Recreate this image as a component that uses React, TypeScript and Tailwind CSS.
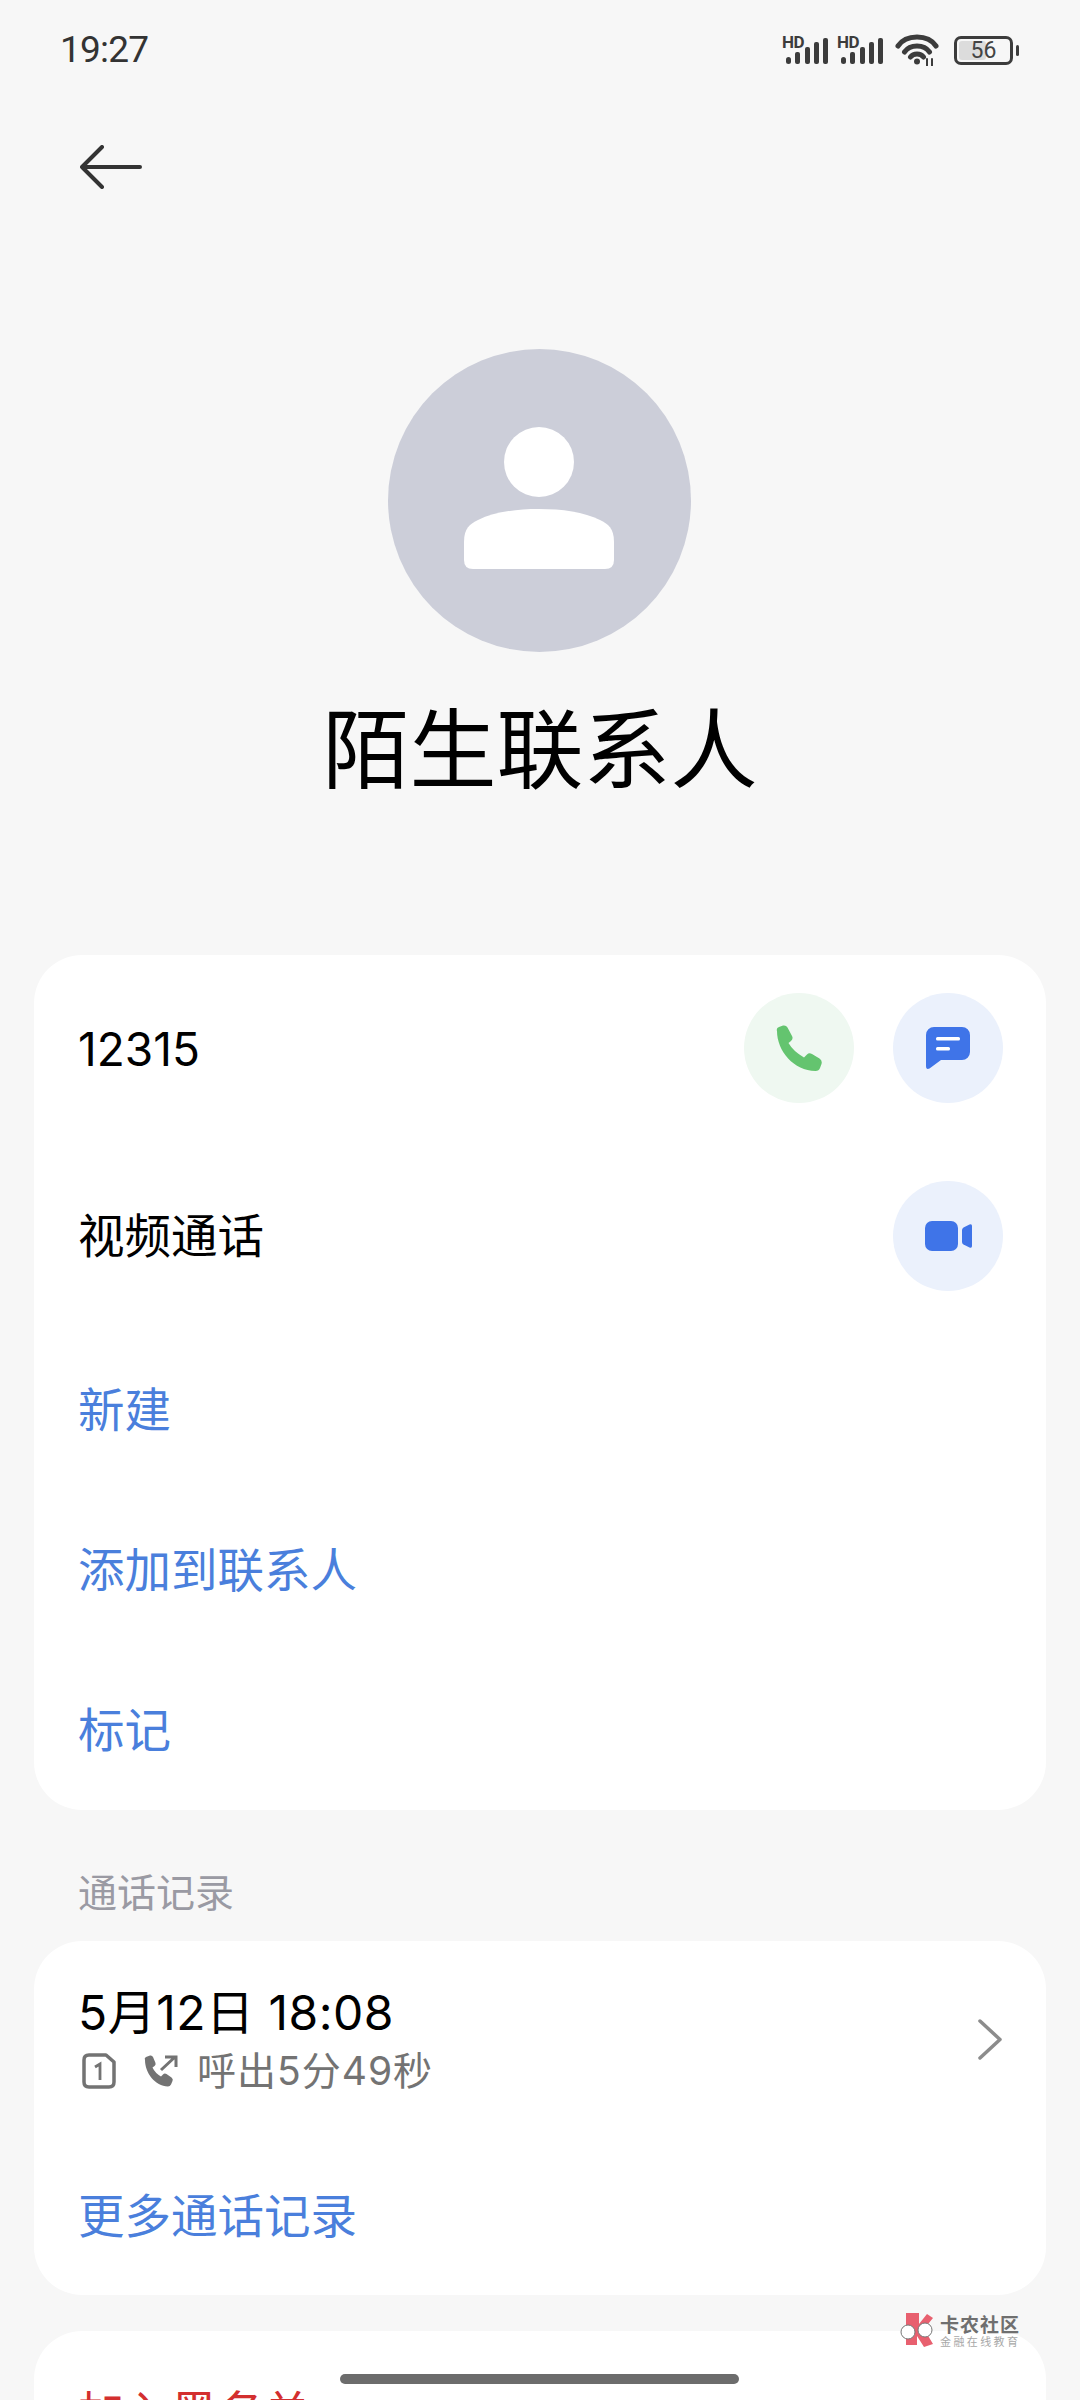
const cjk = "font-['Inter','Noto_Sans_CJK_SC',sans-serif]";

const Signal = () => (
  <div className="relative w-[46px] h-[28px]">
    <span className="absolute left-[-1px] top-[-2px] font-['Roboto',sans-serif] font-bold text-[17px] leading-[16px] tracking-[-0.5px] text-[#3c3c3c]">HD</span>
    <svg width="46" height="28" viewBox="0 0 46 28" fill="#3c3c3c">
      <rect x="3" y="21" width="5" height="7" rx="2.5" />
      <rect x="12" y="16" width="5" height="12" rx="2" />
      <rect x="22" y="11" width="5" height="17" rx="2" />
      <rect x="31" y="6" width="5" height="22" rx="2" />
      <rect x="40" y="2" width="5" height="26" rx="2" />
    </svg>
  </div>
);

const Wifi = () => (
  <svg width="46" height="32" viewBox="0 0 46 32" fill="none" stroke="#3c3c3c" strokeWidth="5" strokeLinecap="round">
    <path d="M3 12C11 0 33 0 41 12" />
    <path d="M9.5 18C15 10 29 10 34.5 18" />
    <path d="M15.5 23C18.5 19 25.5 19 28.5 23" />
    <circle cx="22" cy="27.5" r="3" fill="#3c3c3c" stroke="none" />
    <path d="M32 25V31.5M37 25V31.5" strokeWidth="2" />
  </svg>
);

const Battery = () => (
  <div className="flex items-center gap-[3px]">
    <div className="relative w-[59px] h-[29px] rounded-[7px] border-[3px] border-[#3c3c3c] flex items-center justify-center overflow-hidden">
      <div className="absolute left-[2px] top-[2px] bottom-[2px] w-[27px] rounded-[3px] bg-[#dcdcdc]" />
      <span className="relative font-['Roboto',sans-serif] text-[23px] leading-none text-[#444444]">56</span>
    </div>
    <div className="w-[3px] h-[11px] rounded-full bg-[#3c3c3c]" />
  </div>
);

const PhoneIcon = () => (
  <svg width="46" height="47" viewBox="0 0 46 47" fill="#64c46f">
    <path d="M1 6Q0 3 3 2L7 .6Q10 0 11.5 2.5L16 11Q17.5 14 15 16L12.5 18Q17 26 28 32.5L31 29.5Q33 27.5 36 29L43.5 33.5Q46.5 35.5 45.5 39L44 43Q43 46 39.5 46C18 46 1 26 1 6Z" />
  </svg>
);

const MessageIcon = () => (
  <svg width="44" height="42" viewBox="0 0 44 42">
    <path d="M8 0H36A8 8 0 0 1 44 8V25A8 8 0 0 1 36 33H15L3.5 41.5Q0 43 0 39V8A8 8 0 0 1 8 0Z" fill="#3f74e8" />
    <rect x="10" y="10" width="24" height="3.5" rx="1.5" fill="#ffffff" />
    <rect x="10" y="20" width="14" height="3.5" rx="1.5" fill="#ffffff" />
  </svg>
);

const VideoIcon = () => (
  <svg width="47" height="30" viewBox="0 0 47 30" fill="#3f74e8">
    <rect x="0" y="0" width="33" height="30" rx="7" />
    <path d="M37 9Q37 7.5 38.5 6.5L44.5 3.5Q47 2.5 47 5V25Q47 27.5 44.5 26.5L38.5 23.5Q37 22.5 37 21Z" />
  </svg>
);

const Row = ({ label }: { label: string }) => (
  <div className="h-[160px] pt-[2px] flex items-center text-[46.5px] text-[#4a7fdc]">{label}</div>
);

export default function App() {
  return (
    <div className={`relative w-[1080px] h-[2400px] overflow-hidden bg-[#f7f7f7] ${cjk}`}>
      {/* status bar */}
      <div className="h-[100px] flex items-center justify-between pl-[60px] pr-[61px]">
        <span className="font-['Roboto',sans-serif] text-[37px] tracking-[-0.8px] text-[#333333]">19:27</span>
        <div className="flex items-center gap-[9px]">
          <Signal />
          <Signal />
          <div className="ml-[2px] mr-[4px]"><Wifi /></div>
          <Battery />
        </div>
      </div>

      <div className="h-[134px] flex items-center pl-[80px]">
        <svg width="62" height="44" viewBox="0 0 62 44" fill="none" stroke="#333333" strokeWidth="4" strokeLinecap="round" strokeLinejoin="round">
          <path d="M22 2L2 22L22 42M2 22H60" />
        </svg>
      </div>

      <div className="mt-[115px] ml-[388px] w-[303px] h-[303px] rounded-full bg-[#ccced9] flex items-center justify-center">
        <svg width="150" height="142" viewBox="0 0 150 142" fill="#ffffff" className="mt-[-6px] mr-[1px]">
          <circle cx="75" cy="35" r="35" />
          <path d="M0 115C0 101 6 97 14 93C30 85 52 82 75 82C98 82 120 85 136 93C144 97 150 101 150 115V133Q150 142 141 142H9Q0 142 0 133Z" />
        </svg>
      </div>

      <div className="mt-[39px] text-center text-[87px] leading-[120px] text-black">陌生联系人</div>

      {/* actions */}
      <div className="mt-[144px] mx-[34px] rounded-[48px] bg-white pl-[44px] pr-[43px]">
        <div className="h-[186px] flex items-center justify-between">
          <span className="mt-[2px] text-[46px] text-black">12315</span>
          <div className="flex gap-[39px]">
            <div className="w-[110px] h-[110px] rounded-full bg-[#eff8f1] flex items-center justify-center"><PhoneIcon /></div>
            <div className="w-[110px] h-[110px] rounded-full bg-[#ebf1fc] flex items-center justify-center"><MessageIcon /></div>
          </div>
        </div>
        <div className="h-[189px] flex items-center justify-between">
          <span className="mt-[2px] text-[46.5px] text-black">视频通话</span>
          <div className="w-[110px] h-[110px] rounded-full bg-[#ebf1fc] flex items-center justify-center"><VideoIcon /></div>
        </div>
        <Row label="新建" />
        <Row label="添加到联系人" />
        <Row label="标记" />
      </div>

      <div className="mt-[58px] pl-[78px] text-[39px] leading-[50px] text-[#9a9aa3]">通话记录</div>

      {/* call log */}
      <div className="mt-[23px] mx-[34px] h-[354px] rounded-[48px] bg-white pt-[42px] pl-[44px] pr-[44px]">
        <div className="flex items-center justify-between">
          <div>
            <div className="text-[48px] leading-[60px] tracking-[0.5px] text-black">5月12日 18:08</div>
            <div className="mt-[3px] h-[50px] flex items-center text-[#737373]">
              <svg width="34" height="36" viewBox="0 0 34 36" fill="none" stroke="#737373" strokeWidth="3.5" className="ml-[4px]">
                <path d="M7 2H24L32 9V29Q32 34 27 34H7Q2 34 2 29V7Q2 2 7 2Z" strokeLinejoin="round" />
                <path d="M13 14L18 11V27" strokeWidth="2.8" />
              </svg>
              <svg width="34" height="32" viewBox="0 0 34 32" className="ml-[28px]">
                <path d="M1 5Q0 3 2 2L6 .5Q8 0 9 2L11.5 8Q12 10 10.5 11L8.5 12.5Q11 18 17 21.5L19 19.5Q20.5 18 22.5 19L27.5 22.5Q29.5 24 28.5 26L27 29.5Q26 31.5 24 31.5C11 31 1 18 1 5Z" fill="#737373" />
                <path d="M17 15L31 2M21 2H32V12" fill="none" stroke="#737373" strokeWidth="3" />
              </svg>
              <span className="ml-[19px] text-[39px] tracking-[1px]">呼出5分49秒</span>
            </div>
          </div>
          <svg width="26" height="43" viewBox="0 0 26 43" fill="none" stroke="#8c8c8c" strokeWidth="3.5" strokeLinecap="round" strokeLinejoin="round" className="mr-[-1px]">
            <path d="M3 3L23 21.5L3 40" />
          </svg>
        </div>
        <div className="mt-[90px] text-[46.5px] leading-[60px] text-[#4a7fdc]">更多通话记录</div>
      </div>

      {/* clipped by the bottom of the screen */}
      <div className="mt-[36px] mx-[34px] h-[200px] rounded-[48px] bg-white pt-[52px] pl-[44px]">
        <div className="text-[46.5px] leading-[60px] text-[#d32f2f]">加入黑名单</div>
      </div>

      {/* gesture bar */}
      <div className="absolute left-[340px] top-[2374px] w-[399px] h-[10px] rounded-full bg-[#6c6c6c]" />

      {/* watermark */}
      <div className="absolute left-[900px] top-[2312px] flex items-center gap-[4px]">
        <svg width="36" height="36" viewBox="0 0 36 36">
          <path d="M6 1H19V12L27 2L33 6L24 17L33 32L24 35L17 24L17 33H6Z" fill="#e8606f" />
          <circle cx="8" cy="20" r="7" fill="#ffffff" stroke="#777777" strokeWidth="1" />
          <circle cx="25" cy="18" r="7" fill="#ffffff" stroke="#777777" strokeWidth="1" />
        </svg>
        <div className="flex flex-col font-['Noto_Sans_CJK_SC',sans-serif]">
          <span className="text-[19px] leading-[21px] font-bold tracking-[1px] text-[#6f6f6f] whitespace-nowrap">卡农社区</span>
          <span className="text-[11px] leading-[14px] tracking-[2.4px] text-[#a8a8a8] whitespace-nowrap">金融在线教育</span>
        </div>
      </div>
    </div>
  );
}
